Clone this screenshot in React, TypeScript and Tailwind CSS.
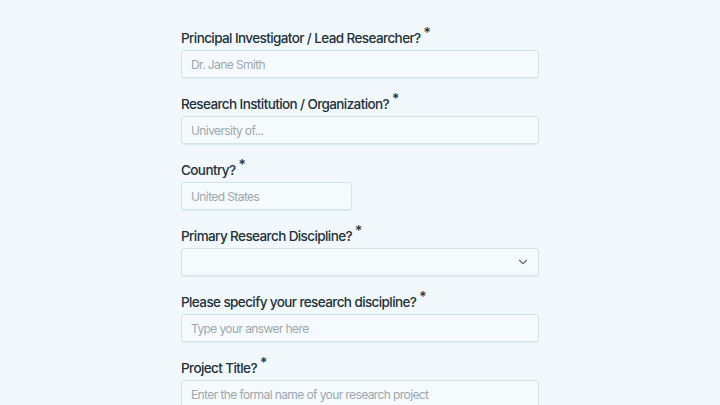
import React from "react";

const Label = ({ children }: { children: React.ReactNode }) => (
  <div className="flex items-start h-[20px] text-[13.5px] leading-[20px] tracking-[-0.6px] font-[450] text-[#22303b]">
    <span>{children}</span>
    <span className="ml-[3px] text-[14px] leading-[14px] -mt-[2px] tracking-normal text-[#2a3540]">*</span>
  </div>
);

const Input = ({ placeholder, narrow }: { placeholder: string; narrow?: boolean }) => (
  <div
    className={`mt-[2px] h-[28px] ${narrow ? "w-[171px]" : "w-full"} rounded-[3px] border border-[#d2e4eb] bg-[#f5fbfd] flex items-center pt-[2px] px-[9px] text-[12px] tracking-[-0.6px] text-[#9ba7af] shadow-[0_1px_1px_rgba(160,190,205,0.25)]`}
  >
    {placeholder}
  </div>
);

const Select = () => (
  <div className="mt-[2px] h-[28px] w-full rounded-[3px] border border-[#d2e4eb] bg-[#f5fbfd] flex items-center justify-end pr-[8px] shadow-[0_1px_1px_rgba(160,190,205,0.25)]">
    <svg width="14" height="14" viewBox="0 0 24 24" fill="none" stroke="#5f6b74" strokeWidth="2" strokeLinecap="round" strokeLinejoin="round">
      <path d="M6 9l6 6 6-6" />
    </svg>
  </div>
);

export default function App() {
  return (
    <div className="w-[720px] h-[405px] overflow-hidden bg-[#f1f9fc]" style={{ fontFamily: "Inter, 'Noto Sans', sans-serif" }}>
      <div className="w-[358px] ml-[181px] pt-[28px] flex flex-col gap-[16px]">
        <div>
          <Label>Principal Investigator / Lead Researcher?</Label>
          <Input placeholder="Dr. Jane Smith" />
        </div>
        <div>
          <Label>Research Institution / Organization?</Label>
          <Input placeholder="University of..." />
        </div>
        <div>
          <Label>Country?</Label>
          <Input placeholder="United States" narrow />
        </div>
        <div>
          <Label>Primary Research Discipline?</Label>
          <Select />
        </div>
        <div>
          <Label>Please specify your research discipline?</Label>
          <Input placeholder="Type your answer here" />
        </div>
        <div>
          <Label>Project Title?</Label>
          <Input placeholder="Enter the formal name of your research project" />
        </div>
      </div>
    </div>
  );
}
